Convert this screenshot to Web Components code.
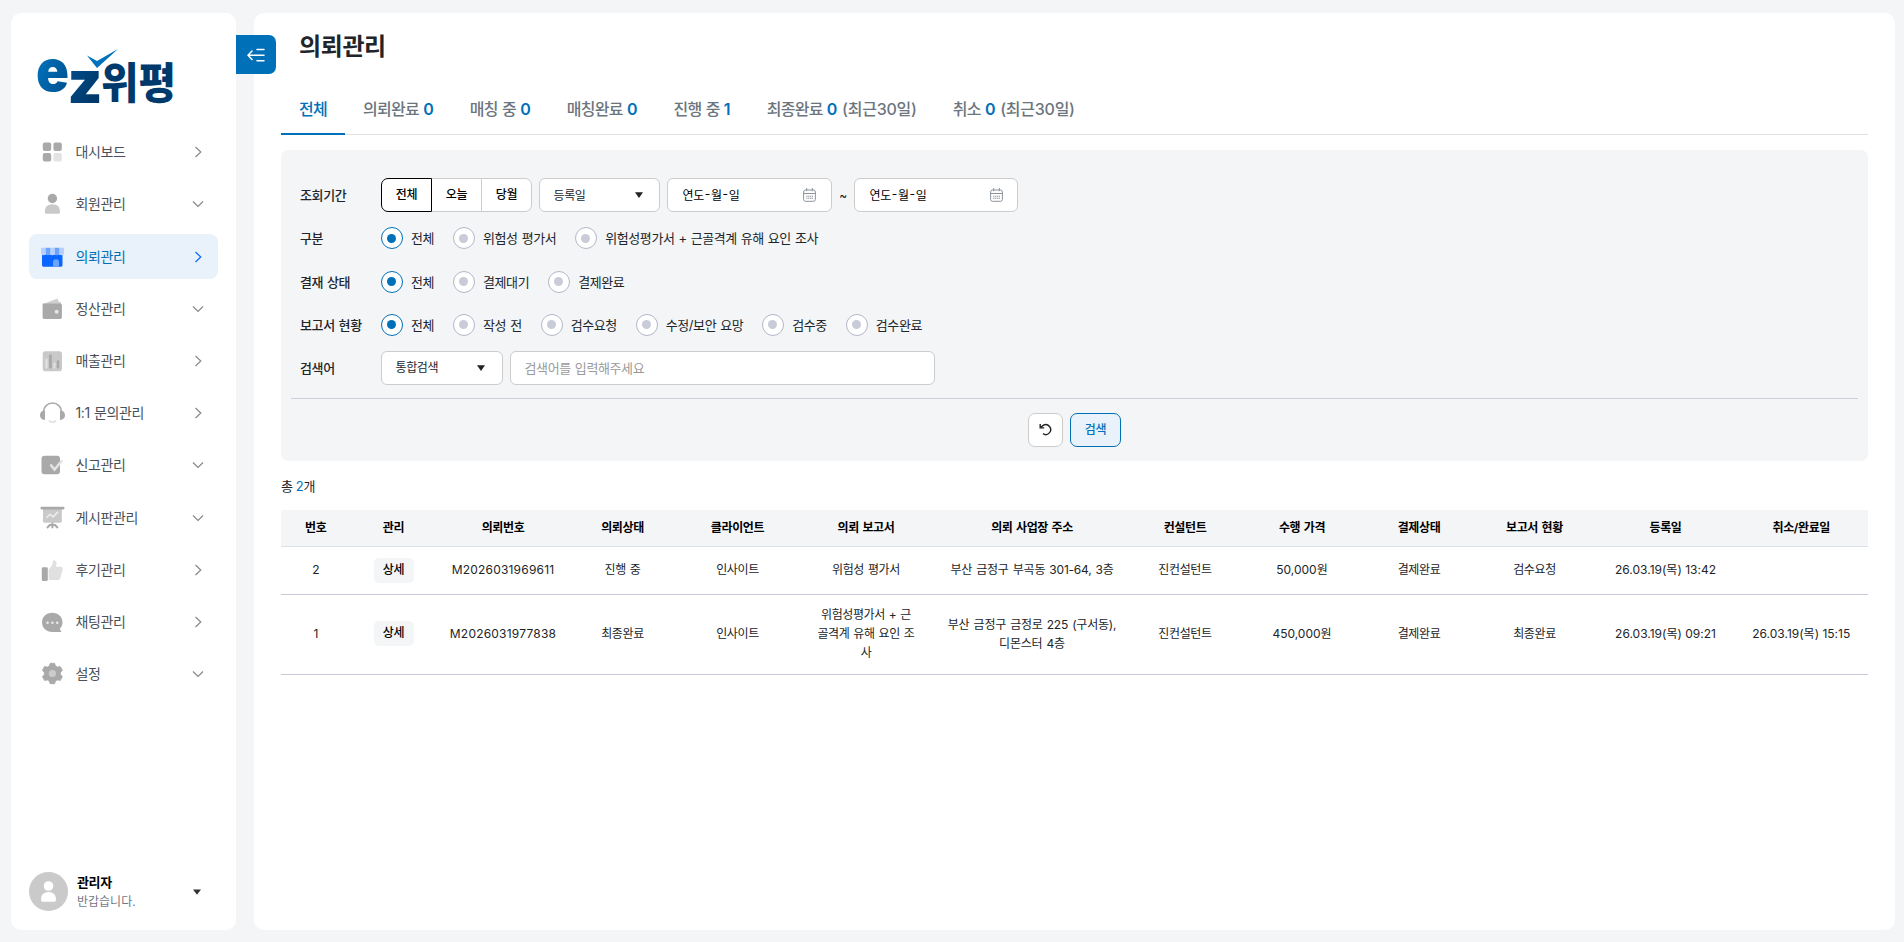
<!DOCTYPE html>
<html lang="ko">
<head>
<meta charset="UTF-8">
<title>의뢰관리</title>
<style>
    html, body {
        margin: 0;
        height: 100%;
    }
    body {
        background: #f3f5f7;
        color: #212529;
        font-family: Inter, "Noto Sans CJK KR", sans-serif;
        font-size: 13px;
        letter-spacing: -0.03em;
        word-spacing: 0.06em;
    }
</style>
</head>
<body>
<admin-app></admin-app>

<script>
const ICONS = {
    dashboard: `<rect x="2.8" y="2.5" width="8.4" height="8.4" rx="2" fill="#a9a9a9"/><rect x="13.4" y="2.5" width="8.4" height="8.4" rx="2" fill="#a9a9a9"/><rect x="2.8" y="13" width="8.4" height="8.4" rx="2" fill="#a9a9a9"/><rect x="13.4" y="13" width="8.4" height="8.4" rx="2" fill="#e3e3e3"/>`,
    member: `<circle cx="12.4" cy="6.5" r="4.7" fill="#a9a9a9"/><path d="M4.8 20c0-5 2.6-7.7 7.6-7.7S20 15 20 20c0 1-.8 1.8-1.8 1.8H6.6c-1 0-1.8-.8-1.8-1.8Z" fill="#c9c9c9"/>`,
    store: `<path d="M2 9.5h20.500V20c0 1-.8 1.800-1.800 1.800H3.800C2.800 21.800 2 21 2 20Z" fill="#0a66ff"/><path d="M13 21.800v-4.600a3 3 0 0 1 6 0v4.600Z" fill="#6ba3ff"/><path d="M1 2.800h4.700v5.200a2.300 2.300 0 0 1-4.700 0ZM10.100 2.800h4.600v5.200a2.300 2.300 0 0 1-4.600 0ZM19.300 2.800H24v5.200a2.300 2.300 0 0 1-4.700 0Z" fill="#b5d0ff"/><path d="M5.700 2.800h4.500v5.200a2.200 2.200 0 0 1-4.500 0ZM14.700 2.800h4.600v5.200a2.300 2.300 0 0 1-4.600 0Z" fill="#6ba3ff"/>`,
    wallet: `<path d="M3.200 7 17.300 1.500 19 5h2v4H3.200Z" fill="#d0d0d0"/><path d="M2.600 6.600h17.600c1 0 1.700.7 1.700 1.700v12c0 1-.7 1.700-1.700 1.700H4.300c-1 0-1.700-.7-1.700-1.700Z" fill="#a9a9a9"/><circle cx="16.700" cy="14.800" r="2" fill="#e6e6e6"/>`,
    chart: `<rect x="2.700" y="2.200" width="19.300" height="20" rx="2.800" fill="#c9c9c9"/><rect x="5.400" y="9.600" width="2.200" height="9.800" rx="1" fill="#e3e3e3"/><rect x="9" y="5.600" width="2.800" height="14" rx="1" fill="#a9a9a9"/><rect x="13.400" y="13.500" width="2" height="6" rx="1" fill="#e3e3e3"/><rect x="16.800" y="11.300" width="2.400" height="8.200" rx="1" fill="#a9a9a9"/>`,
    headset: `<path d="M3.500 11a9 9 0 0 1 18 0" fill="none" stroke="#a9a9a9" stroke-width="1.500"/><path d="M5 9.600v9.300c-3 .2-5-1.700-5-4.600s2-4.900 5-4.700ZM20 9.600v9.300c3 .2 5-1.700 5-4.600s-2-4.900-5-4.700Z" fill="#a9a9a9"/><path d="M9 19.500c1.600 2.400 5.400 2.400 7 0" fill="none" stroke="#dedede" stroke-width="1.600"/>`,
    report: `<rect x="1.500" y="2.700" width="18.500" height="18.500" rx="3" fill="#a9a9a9"/><path d="m10.500 11.500 4 5L22.300 7.300" fill="none" stroke="#e4e4e4" stroke-width="2.500"/>`,
    board: `<path d="M3 2.500h18.800v12.800c0 .8-.6 1.400-1.400 1.400h-16c-.8 0-1.400-.6-1.400-1.400Z" fill="#c9c9c9"/><rect x=".6" y=".8" width="23.800" height="2.600" rx=".8" fill="#a9a9a9"/><path d="m6.500 11.700 3.500-3.500 3 2.700 5-5" fill="none" stroke="#ededed" stroke-width="1.500"/><path d="M12.400 16.500v5.700M7 22l2.700-3h5.400l2.700 3" fill="none" stroke="#a9a9a9" stroke-width="2"/>`,
    thumb: `<rect x="1.800" y="9.200" width="6" height="13.800" rx="1.300" fill="#a9a9a9"/><path d="M8.600 11.300c2.200-1.600 3.600-4 4.100-7 .3-1.700 1.200-2.300 2.300-1.800 2 1 1.900 3.500.8 6.300h5c1.500 0 2.300 1 1.900 2.500l-2.300 8.600c-.3 1.300-1.200 2-2.500 2H10c-.9 0-1.400-.5-1.400-1.400Z" fill="#e0e0e0"/>`,
    chat: `<path d="M12.200 2.700c5.800 0 10.300 4 10.300 9.600 0 2.800-1 5-2.800 6.800l1.900 2.900h-9.400C6.400 22 2 17.900 2 12.300s4.400-9.600 10.200-9.600Z" fill="#a9a9a9"/><g fill="#e8e8e8"><circle cx="7.600" cy="12.700" r="1.300"/><circle cx="12.400" cy="12.700" r="1.300"/><circle cx="17.200" cy="12.700" r="1.300"/></g>`,
    setting: `<path d="m9.300 4 .9-2.700h4.400l.9 2.700 1.900 1.100 2.800-.6 2.200 3.800-1.900 2.100v2.200l1.900 2.100-2.200 3.800-2.800-.6-1.900 1.100-.9 2.700h-4.400L9.300 19l-1.900-1.100-2.800.6-2.200-3.800 1.900-2.100v-2.200L2.400 8.300l2.200-3.800 2.800.6Z" fill="#a9a9a9" stroke="#a9a9a9" stroke-width=".8" stroke-linejoin="round"/><circle cx="12.400" cy="11.500" r="3.600" fill="#ccc"/>`
};

// Attach an open shadow root and fill it
function render(el, css, html) {
    el.attachShadow({ mode: 'open' }).innerHTML = `<style>${css}</style>${html}`;
}

class BrandLogo extends HTMLElement {
    connectedCallback() {
        render(this, `
            :host { display: block; height: 58px; }
            svg { display: block; overflow: visible; }
            text { font-family: Inter, "Noto Sans CJK KR", sans-serif; font-weight: 900; letter-spacing: 0; }
        `, `
            <svg width="140" height="58" viewBox="0 0 140 58">
                <defs>
                    <linearGradient id="e" x1="0" y1="0" x2="1" y2="1"><stop offset=".2" stop-color="#0072bd"/><stop offset="1" stop-color="#004a85"/></linearGradient>
                    <linearGradient id="z" x1="0" y1="0" x2="1" y2="1"><stop offset="0" stop-color="#005596"/><stop offset=".7" stop-color="#003a6c"/></linearGradient>
                </defs>
                <text fill="url(#e)" font-size="58" textLength="33" lengthAdjust="spacingAndGlyphs" x="-1" y="44">e</text>
                <text fill="url(#z)" font-size="58" textLength="35" lengthAdjust="spacingAndGlyphs" x="30.500" y="56">z</text>
                <text fill="#003a6c" font-size="43" textLength="75" lengthAdjust="spacingAndGlyphs" x="64" y="52">위평</text>
                <path d="M50 8.500 60 14 81 2 60 21Z" fill="#0072bd"/>
            </svg>
        `);
    }
}
customElements.define('brand-logo', BrandLogo);

class NavItem extends HTMLElement {
    connectedCallback() {
        const active = this.hasAttribute('active');
        const down = this.hasAttribute('down');
        const stroke = active ? '#0a66ff' : '#888';
        render(this, `
            :host {
                display: flex;
                align-items: center;
                box-sizing: border-box;
                height: 45px;
                padding: 0 14.500px 0 10.5px;
                border-radius: 8px;
                font-size: 14px;
                color: #495057;
            }
            :host([active]) { background: #e9f2fa; color: #0070b8; }
            .icon { flex: none; width: 25px; height: 24px; }
            .text { flex: 1; margin-left: 11px; line-height: 20px; }
            .arrow { flex: none; width: 12px; height: 12px; }
        `, `
            <svg class="icon" viewBox="0 0 25 24">${ICONS[this.getAttribute('icon')]}</svg>
            <span class="text"><slot></slot></span>
            <svg class="arrow" viewBox="0 0 12 12" fill="none" stroke="${stroke}" stroke-width="1.200">
                <path d="${down ? 'M1 3.500 6 8.500 11 3.500' : 'M3.500 1 8.800 6 3.500 11'}"/>
            </svg>
        `);
    }
}
customElements.define('nav-item', NavItem);

class UserCard extends HTMLElement {
    connectedCallback() {
        render(this, `
            :host { display: flex; align-items: center; height: 40px; padding-right: 17px; }
            .avatar { flex: none; width: 39px; height: 39px; }
            .info { flex: 1; margin-left: 9px; }
            .name { font-size: 13px; font-weight: 700; line-height: 20px; color: #000; }
            .msg { font-size: 12px; line-height: 19px; letter-spacing: 0; color: #747887; }
            .caret { width: 8px; height: 6px; margin-top: 2px; }
        `, `
            <svg class="avatar" viewBox="0 0 39 39">
                <circle cx="19.500" cy="19.500" r="19.500" fill="#cacaca"/>
                <circle cx="19.500" cy="14" r="4.800" fill="#fff"/>
                <path d="M12 27.500c0-4.600 2.800-7.500 7.500-7.500s7.500 2.900 7.500 7.500c0 1.500-.8 2.300-2.200 2.300H14.200c-1.400 0-2.200-.8-2.200-2.300Z" fill="#fff"/>
            </svg>
            <div class="info">
                <div class="name">${this.getAttribute('name')}</div>
                <div class="msg"><slot></slot></div>
            </div>
            <svg class="caret" viewBox="0 0 8 6"><path d="M0 .5h8L4 5.800Z" fill="#333"/></svg>
        `);
    }
}
customElements.define('user-card', UserCard);

class SideBar extends HTMLElement {
    connectedCallback() {
        render(this, `
            :host {
                display: flex;
                flex-direction: column;
                box-sizing: border-box;
                width: 225px;
                padding: 34px 18px 19px;
                background: #fff;
                border-radius: 10px;
            }
            brand-logo { margin-left: 8px; margin-bottom: 24.800px; }
            nav { display: flex; flex-direction: column; gap: 7.200px; flex: 1; }
        `, `
            <brand-logo></brand-logo>
            <nav>
                <nav-item icon="dashboard">대시보드</nav-item>
                <nav-item icon="member" down>회원관리</nav-item>
                <nav-item icon="store" active>의뢰관리</nav-item>
                <nav-item icon="wallet" down>정산관리</nav-item>
                <nav-item icon="chart">매출관리</nav-item>
                <nav-item icon="headset">1:1 문의관리</nav-item>
                <nav-item icon="report" down>신고관리</nav-item>
                <nav-item icon="board" down>게시판관리</nav-item>
                <nav-item icon="thumb">후기관리</nav-item>
                <nav-item icon="chat">채팅관리</nav-item>
                <nav-item icon="setting" down>설정</nav-item>
            </nav>
            <user-card name="관리자">반갑습니다.</user-card>
        `);
    }
}
customElements.define('side-bar', SideBar);

class TabItem extends HTMLElement {
    connectedCallback() {
        const count = this.getAttribute('count');
        const note = this.getAttribute('note');
        render(this, `
            :host {
                display: block;
                box-sizing: border-box;
                height: 50px;
                padding: 12px 18px 0;
                font-size: 16px;
                font-weight: 500;
                line-height: 24px;
                letter-spacing: -0.045em;
                word-spacing: 0.04em;
                color: #6c757d;
                white-space: nowrap;
            }
            :host([active]) { color: #0070b8; border-bottom: 2px solid #0070b8; }
            b { font-weight: 600; color: #0070b8; letter-spacing: 0; }
            .note { letter-spacing: -0.015em; }
        `, `<slot></slot>${count ? ` <b>${count}</b>` : ''}${note ? `<span class="note"> ${note}</span>` : ''}`);
    }
}
customElements.define('tab-item', TabItem);

class TabBar extends HTMLElement {
    connectedCallback() {
        render(this, `
            :host { display: flex; height: 49px; border-bottom: 1px solid #dee2e6; }
        `, `<slot></slot>`);
    }
}
customElements.define('tab-bar', TabBar);

class FilterRow extends HTMLElement {
    connectedCallback() {
        render(this, `
            :host { display: flex; align-items: center; height: 34px; }
            .label { flex: none; width: 81px; font-weight: 500; line-height: 20px; color: #212529; }
            .body { display: flex; align-items: center; }
        `, `<div class="label">${this.getAttribute('label')}</div><div class="body"><slot></slot></div>`);
    }
}
customElements.define('filter-row', FilterRow);

class SegmentGroup extends HTMLElement {
    connectedCallback() {
        const items = this.getAttribute('items').split(',');
        render(this, `
            :host { display: flex; margin-right: 7px; }
            span {
                box-sizing: border-box;
                width: 51px;
                height: 34px;
                margin-left: -1px;
                border: 1px solid #ccc;
                background: #fff;
                font-size: 12px;
                font-weight: 500;
                line-height: 31px;
                text-align: center;
                color: #000;
            }
            span:first-of-type { margin-left: 0; border-color: #000; border-radius: 7px 0 0 7px; }
            span:nth-of-type(2) { border-left: 0; width: 50px; margin-left: 0; }
            span:last-of-type { border-radius: 0 7px 7px 0; }
        `, items.map(item => `<span>${item}</span>`).join(''));
    }
}
customElements.define('segment-group', SegmentGroup);

class SelectBox extends HTMLElement {
    connectedCallback() {
        render(this, `
            :host {
                display: flex;
                align-items: center;
                justify-content: space-between;
                box-sizing: border-box;
                width: 121px;
                height: 34px;
                margin-right: 7px;
                padding: 0 16px 2px 13.500px;
                border: 1px solid #ccc;
                border-radius: 6px;
                background: #fff;
                font-size: 12px;
                color: #212529;
            }
            :host([wide]) { width: 122px; padding-right: 17px; padding-bottom: 4px; }
            svg { width: 8px; height: 6px; margin-top: 2px; }
            :host([wide]) svg { margin-top: 4px; }
        `, `<slot></slot><svg viewBox="0 0 8 6"><path d="M0 .3h8L4 6Z" fill="#222"/></svg>`);
    }
}
customElements.define('select-box', SelectBox);

class DateField extends HTMLElement {
    connectedCallback() {
        render(this, `
            :host {
                display: flex;
                align-items: center;
                justify-content: space-between;
                box-sizing: border-box;
                width: 165px;
                height: 34px;
                padding: 0 15px 0 14.500px;
                border: 1px solid #ccc;
                border-radius: 6px;
                background: #fff;
                font-size: 12px;
                color: #000;
            }
            :host(:last-child) { width: 164px; padding-right: 14px; }
            .text { display: flex; gap: 1px; margin-top: -2px; }
            svg { width: 13px; height: 14px; }
        `, `
            <span class="text"><span>연도</span><span>-</span><span>월</span><span>-</span><span>일</span></span>
            <svg viewBox="0 0 13 14" fill="none" stroke="#8d949c">
                <rect x=".6" y="2" width="11.800" height="11.300" rx="2"/>
                <path d="M.6 5.500h11.800M3.700 0v3.200M9.300 0v3.200"/>
                <path d="M3.200 8.200h6.800M3.200 10.300h6.800" stroke-width="1.100" stroke-dasharray="1.300 .6"/>
            </svg>
        `);
    }
}
customElements.define('date-field', DateField);

class RadioOption extends HTMLElement {
    connectedCallback() {
        render(this, `
            :host { display: flex; align-items: center; margin-right: 19px; line-height: 20px; letter-spacing: -0.033em; white-space: nowrap; }
            i {
                display: flex;
                align-items: center;
                justify-content: center;
                box-sizing: border-box;
                width: 22px;
                height: 22px;
                margin-right: 8px;
                border: 1px solid #b4b6c8;
                border-radius: 50%;
                background: #fff;
            }
            i::after { content: ""; width: 9px; height: 9px; margin-right: 1px; border-radius: 50%; background: #c9ccd8; }
            :host([checked]) i { border-color: #0070b8; }
            :host([checked]) i::after { background: #0070b8; }
        `, `<i></i><span><slot></slot></span>`);
    }
}
customElements.define('radio-option', RadioOption);

class FilterPanel extends HTMLElement {
    connectedCallback() {
        render(this, `
            :host {
                display: block;
                box-sizing: border-box;
                height: 311px;
                margin-top: 15px;
                padding: 28px 10px 0;
                border-radius: 7px;
                background: #f3f5f7;
            }
            .rows { display: flex; flex-direction: column; gap: 9.250px; padding: 0 9px 12.500px; border-bottom: 1px solid #ccd0da; }
            .tilde { width: 22px; text-align: center; font-size: 12px; }
            .search {
                box-sizing: border-box;
                width: 425px;
                height: 34px;
                padding-left: 13.500px;
                border: 1px solid #ccc;
                border-radius: 6px;
                background: #fff;
                line-height: 32px;
                color: #9a9a9a;
            }
            .actions { display: flex; justify-content: center; gap: 7px; margin-top: 14px; }
            .btn {
                display: flex;
                align-items: center;
                justify-content: center;
                box-sizing: border-box;
                height: 34px;
                border: 1px solid #ccc;
                border-radius: 7px;
                background: #fff;
            }
            .reset { width: 35px; }
            .submit { width: 51px; padding-bottom: 2px; border-color: #0070b8; background: #e9f2fa; color: #0070b8; font-size: 12px; font-weight: 500; }
        `, `
            <div class="rows">
                <filter-row label="조회기간">
                    <segment-group items="전체,오늘,당월"></segment-group>
                    <select-box>등록일</select-box>
                    <date-field></date-field>
                    <span class="tilde">~</span>
                    <date-field></date-field>
                </filter-row>
                <filter-row label="구분">
                    <radio-option checked>전체</radio-option>
                    <radio-option>위험성 평가서</radio-option>
                    <radio-option>위험성평가서 + 근골격계 유해 요인 조사</radio-option>
                </filter-row>
                <filter-row label="결재 상태">
                    <radio-option checked>전체</radio-option>
                    <radio-option>결제대기</radio-option>
                    <radio-option>결제완료</radio-option>
                </filter-row>
                <filter-row label="보고서 현황">
                    <radio-option checked>전체</radio-option>
                    <radio-option>작성 전</radio-option>
                    <radio-option>검수요청</radio-option>
                    <radio-option>수정/보안 요망</radio-option>
                    <radio-option>검수중</radio-option>
                    <radio-option>검수완료</radio-option>
                </filter-row>
                <filter-row label="검색어">
                    <select-box wide>통합검색</select-box>
                    <div class="search">검색어를 입력해주세요</div>
                </filter-row>
            </div>
            <div class="actions">
                <div class="btn reset">
                    <svg width="14" height="13" viewBox="0 0 14 13" fill="none" stroke="#222" stroke-width="1.400">
                        <path d="M1.500 4.500 4.200 2.400A4.900 4.900 0 1 1 4 10.700"/>
                        <path d="M1.200 1v3.900h4"/>
                    </svg>
                </div>
                <div class="btn submit">검색</div>
            </div>
        `);
    }
}
customElements.define('filter-panel', FilterPanel);

const COLUMNS = [
    ['번호', 69.5], ['관리', 86], ['의뢰번호', 133], ['의뢰상태', 106], ['클라이언트', 124],
    ['의뢰 보고서', 133], ['의뢰 사업장 주소', 199], ['컨설턴트', 107], ['수행 가격', 127],
    ['결제상태', 107], ['보고서 현황', 124], ['등록일', 138], ['취소/완료일', 133.5]
];

const ROWS = [
    ['2', '상세', 'M2026031969611', '진행 중', '인사이트', '위험성 평가서', '부산 금정구 부곡동 301-64, 3층', '진컨설턴트', '50,000원', '결제완료', '검수요청', '26.03.19(목) 13:42', ''],
    ['1', '상세', 'M2026031977838', '최종완료', '인사이트', '위험성평가서 + 근골격계 유해 요인 조사', '부산 금정구 금정로 225 (구서동), 디몬스터 4층', '진컨설턴트', '450,000원', '결제완료', '최종완료', '26.03.19(목) 09:21', '26.03.19(목) 15:15']
];

class RequestTable extends HTMLElement {
    connectedCallback() {
        const cell = (text, i) => i === 1 ? `<td><span class="detail">${text}</span></td>` : `<td>${text}</td>`;
        render(this, `
            :host { display: block; margin-top: 14px; }
            table { width: 100%; table-layout: fixed; border-collapse: collapse; font-size: 12px; line-height: 19.200px; text-align: center; word-spacing: 0.08em; }
            th { height: 36px; padding: 0; background: #f3f5f7; border-bottom: 1px solid #dde1e8; font-weight: 600; color: #000; }
            td { padding: 10px 0 11px; border-bottom: 1px solid #c8cadb; word-break: break-all; }
            tbody tr:first-child td { height: 26px; }
            td:nth-child(3) { letter-spacing: 0.017em; }
            td:nth-child(6) { padding-left: 17px; padding-right: 17px; }
            td:nth-child(7) { padding-left: 14px; padding-right: 14px; letter-spacing: -0.018em; }
            td:nth-child(9), td:nth-child(12), td:nth-child(13) { letter-spacing: 0; }
            td:nth-child(12), td:nth-child(13) { word-spacing: 0; }
            .detail { display: inline-block; width: 40px; height: 25px; border-radius: 5px; background: #f3f5f7; font-weight: 500; line-height: 24px; vertical-align: middle; color: #000; }
        `, `
            <table>
                <colgroup>${COLUMNS.map(c => `<col style="width:${c[1]}px">`).join('')}</colgroup>
                <thead><tr>${COLUMNS.map(c => `<th>${c[0]}</th>`).join('')}</tr></thead>
                <tbody>${ROWS.map(r => `<tr>${r.map(cell).join('')}</tr>`).join('')}</tbody>
            </table>
        `);
    }
}
customElements.define('request-table', RequestTable);

class AdminApp extends HTMLElement {
    connectedCallback() {
        render(this, `
            :host { display: flex; gap: 18px; box-sizing: border-box; height: 942px; padding: 13px 9px 12px 11px; }
            main {
                position: relative;
                flex: 1;
                box-sizing: border-box;
                padding: 16px 27px 0;
                border-radius: 10px;
                background: #fff;
            }
            .toggle {
                position: absolute;
                top: 22px;
                left: -18px;
                display: flex;
                align-items: center;
                justify-content: center;
                width: 40px;
                height: 39px;
                border-radius: 0 7px 7px 0;
                background: #0070b8;
            }
            h1 { margin: 0 0 20px 18px; height: 36px; font-size: 24px; font-weight: 600; line-height: 36px; }
            .total { margin-top: 15px; line-height: 20px; word-spacing: 0; }
            .total b { font-weight: 400; color: #0070b8; }
        `, `
            <side-bar></side-bar>
            <main>
                <div class="toggle">
                    <svg width="18" height="14" viewBox="0 0 18 14" fill="none" stroke="#fff" stroke-width="1.500" stroke-linecap="round">
                        <path d="M1 7.200h16M5 3 1 7.200l4 4.200M10 1.500h7M10 12.800h7"/>
                    </svg>
                </div>
                <h1>의뢰관리</h1>
                <tab-bar>
                    <tab-item active>전체</tab-item>
                    <tab-item count="0">의뢰완료</tab-item>
                    <tab-item count="0">매칭 중</tab-item>
                    <tab-item count="0">매칭완료</tab-item>
                    <tab-item count="1">진행 중</tab-item>
                    <tab-item count="0" note="(최근30일)">최종완료</tab-item>
                    <tab-item count="0" note="(최근30일)">취소</tab-item>
                </tab-bar>
                <filter-panel></filter-panel>
                <div class="total">총 <b>2</b>개</div>
                <request-table></request-table>
            </main>
        `);
    }
}
customElements.define('admin-app', AdminApp);
</script>
</body>
</html>
